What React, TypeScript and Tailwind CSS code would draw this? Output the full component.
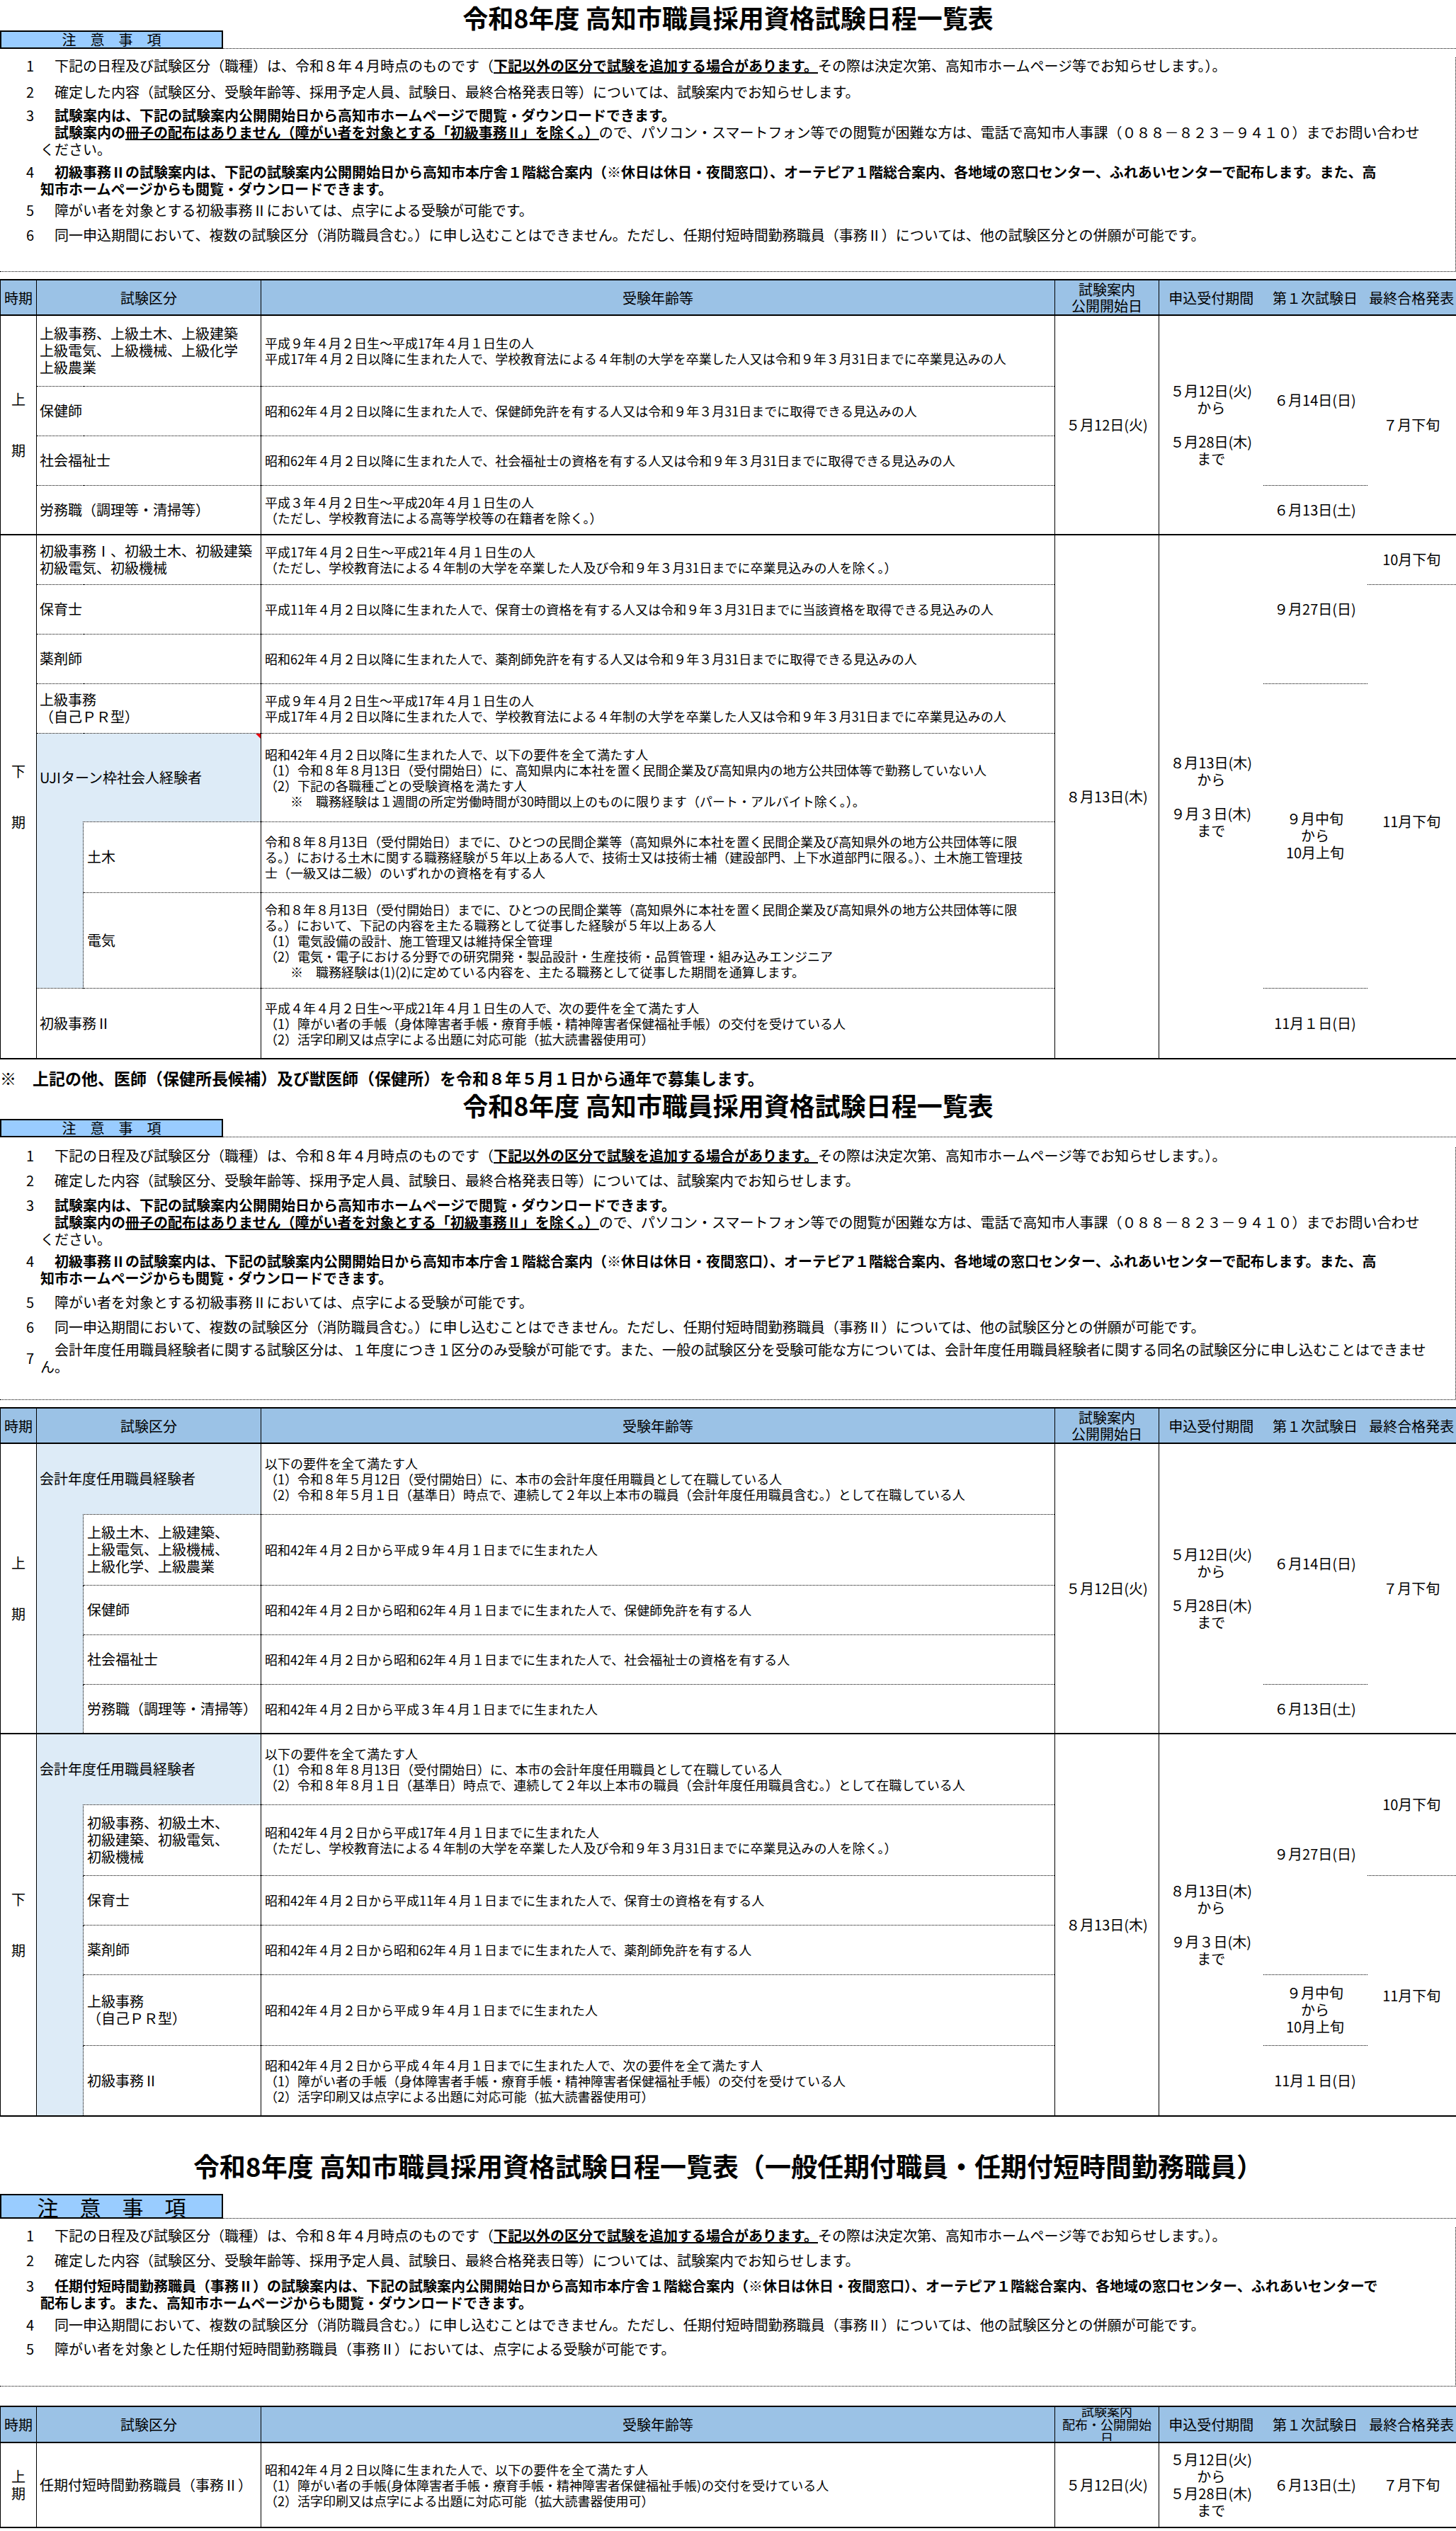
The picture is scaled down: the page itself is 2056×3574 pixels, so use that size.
import React from 'react';

// shared cell styles (Excel-like grid: solid verticals, dotted row rules)
const DT = 'border-t border-black [border-top-style:dotted]';
const DL = 'border-l border-black [border-left-style:dotted]';
const SR = 'border-r border-black';
const BLUE = 'bg-[#ddebf7]';
const PERIOD = 'border-x border-black text-center text-[20px] leading-[24px]';
const KUBUN = `${DT} ${SR} pl-[4px] text-[20px] leading-[24px] whitespace-nowrap`;
const LABEL = `${DT} ${DL} ${SR} pl-[5px] text-[20px] leading-[24px] whitespace-nowrap`;
const AGE = `${DT} ${SR} pl-[5px] text-[18px] leading-[22px] whitespace-nowrap`;
const DATE = 'text-center text-[20px] leading-[24px] whitespace-nowrap';

const SP = '　';

function NoticeHead({ big = false }: { big?: boolean }) {
  return (
    <div className="flex items-end">
      <div
        className={`flex w-[315px] items-center justify-center border-2 border-black bg-[#99ccff] leading-none ${
          big ? 'h-[35px] text-[30px]' : 'h-[26px] text-[20px]'
        }`}
      >
        注　意　事　項
      </div>
      <div className="flex-1 border-b border-dotted border-black" />
    </div>
  );
}

function Note({
  n,
  className = '',
  mid = false,
  children,
}: {
  n: string;
  className?: string;
  mid?: boolean;
  children: React.ReactNode;
}) {
  return (
    <div
      className={`flex ${mid ? 'items-center' : 'items-start'} pl-[37px] text-[20px] leading-[24px] whitespace-nowrap ${className}`}
    >
      <span className="w-[20px] shrink-0">{n}</span>
      <div>{children}</div>
    </div>
  );
}

function Note1({ className }: { className: string }) {
  return (
    <Note n="1" className={className}>
      {SP + '下記の日程及び試験区分（職種）は、令和８年４月時点のものです（'}
      <span className="font-bold underline">下記以外の区分で試験を追加する場合があります。</span>
      {'その際は決定次第、高知市ホームページ等でお知らせします。）。'}
    </Note>
  );
}

function Note2({ className }: { className: string }) {
  return (
    <Note n="2" className={className}>
      {SP + '確定した内容（試験区分、受験年齢等、採用予定人員、試験日、最終合格発表日等）については、試験案内でお知らせします。'}
    </Note>
  );
}

function Note3({ className }: { className: string }) {
  return (
    <Note n="3" className={className}>
      <span className="font-bold">{SP + '試験案内は、下記の試験案内公開開始日から高知市ホームページで閲覧・ダウンロードできます。'}</span>
      <br />
      <span className="font-bold">
        {SP + '試験案内の'}
        <span className="underline">冊子の配布はありません（障がい者を対象とする「初級事務Ⅱ」を除く。）</span>
      </span>
      {'ので、パソコン・スマートフォン等での閲覧が困難な方は、電話で高知市人事課（０８８－８２３－９４１０）までお問い合わせ'}
      <br />
      {'ください。'}
    </Note>
  );
}

function Note4({ className }: { className: string }) {
  return (
    <Note n="4" className={className}>
      <span className="font-bold">
        {SP +
          '初級事務Ⅱの試験案内は、下記の試験案内公開開始日から高知市本庁舎１階総合案内（※休日は休日・夜間窓口）、オーテピア１階総合案内、各地域の窓口センター、ふれあいセンターで配布します。また、高'}
        <br />
        {'知市ホームページからも閲覧・ダウンロードできます。'}
      </span>
    </Note>
  );
}

function Note6({ n, className }: { n: string; className: string }) {
  return (
    <Note n={n} className={className}>
      {SP +
        '同一申込期間において、複数の試験区分（消防職員含む。）に申し込むことはできません。ただし、任期付短時間勤務職員（事務Ⅱ）については、他の試験区分との併願が可能です。'}
    </Note>
  );
}

function Cols() {
  return (
    <colgroup>
      <col className="w-[51px]" />
      <col className="w-[66px]" />
      <col className="w-[251px]" />
      <col className="w-[1121px]" />
      <col className="w-[147px]" />
      <col className="w-[147px]" />
      <col className="w-[147px]" />
      <col className="w-[126px]" />
    </colgroup>
  );
}

function Head({ third = false }: { third?: boolean }) {
  return (
    <tr
      className={`${third ? 'h-[51px]' : 'h-[50px]'} border-y-2 border-black bg-[#9bc2e6] text-center text-[20px] leading-[23px] whitespace-nowrap`}
    >
      <td className="border-x border-black">時期</td>
      <td colSpan={2} className={SR}>試験区分</td>
      <td className={SR}>受験年齢等</td>
      <td className={SR}>
        {third ? (
          <div className="flex h-[47px] flex-col justify-center overflow-hidden text-[18px] leading-[19px]">
            <span>試験案内</span>
            <span>配布・公開開始</span>
            <span>日</span>
          </div>
        ) : (
          <>
            試験案内
            <br />
            公開開始日
          </>
        )}
      </td>
      <td>申込受付期間</td>
      <td>第１次試験日</td>
      <td className={SR}>最終合格発表</td>
    </tr>
  );
}

export default function App() {
  return (
    <div className="w-[2056px] overflow-x-clip bg-white text-black font-['Noto_Sans_CJK_JP','Noto_Sans',sans-serif]">
      {/* ===== 1. 令和8年度 一覧表 ===== */}
      <div className="flex h-[43px] items-center justify-center pt-[4px] text-[36px] leading-[38px] font-bold whitespace-nowrap">
        令和8年度 高知市職員採用資格試験日程一覧表
      </div>
      <NoticeHead />
      <div className="h-[303px] border-r border-b border-dotted border-black">
        <Note1 className="mt-[12px]" />
        <Note2 className="mt-[13px]" />
        <Note3 className="mt-[9px]" />
        <Note4 className="mt-[8px]" />
        <Note n="5" className="mt-[6px]">
          {SP + '障がい者を対象とする初級事務Ⅱにおいては、点字による受験が可能です。'}
        </Note>
        <Note6 n="6" className="mt-[11px]" />
      </div>

      <table className="mt-[10px] w-full table-fixed border-collapse">
        <Cols />
        <tbody>
          <Head />
          {/* 上期 */}
          <tr className="h-[100px]">
            <td rowSpan={4} className={PERIOD}>
              上<br /><br /><br />期
            </td>
            <td colSpan={2} className={KUBUN}>
              上級事務、上級土木、上級建築<br />上級電気、上級機械、上級化学<br />上級農業
            </td>
            <td className={AGE}>
              平成９年４月２日生～平成17年４月１日生の人
              <br />
              平成17年４月２日以降に生まれた人で、学校教育法による４年制の大学を卒業した人又は令和９年３月31日までに卒業見込みの人
            </td>
            <td rowSpan={4} className={`${SR} ${DATE}`}>５月12日(火)</td>
            <td rowSpan={4} className={DATE}>
              ５月12日(火)<br />から<br /><br />５月28日(木)<br />まで
            </td>
            <td rowSpan={3} className={`${DT} ${DATE}`}>６月14日(日)</td>
            <td rowSpan={4} className={`${DT} ${SR} ${DATE}`}>７月下旬</td>
          </tr>
          <tr className="h-[70px]">
            <td colSpan={2} className={KUBUN}>保健師</td>
            <td className={AGE}>
              昭和62年４月２日以降に生まれた人で、保健師免許を有する人又は令和９年３月31日までに取得できる見込みの人
            </td>
          </tr>
          <tr className="h-[70px]">
            <td colSpan={2} className={KUBUN}>社会福祉士</td>
            <td className={AGE}>
              昭和62年４月２日以降に生まれた人で、社会福祉士の資格を有する人又は令和９年３月31日までに取得できる見込みの人
            </td>
          </tr>
          <tr className="h-[70px]">
            <td colSpan={2} className={KUBUN}>労務職（調理等・清掃等）</td>
            <td className={AGE}>
              平成３年４月２日生～平成20年４月１日生の人
              <br />
              （ただし、学校教育法による高等学校等の在籍者を除く。）
            </td>
            <td className={`${DT} ${DATE}`}>６月13日(土)</td>
          </tr>
          {/* 下期 */}
          <tr className="h-[70px] border-t-2 border-black">
            <td rowSpan={8} className={PERIOD}>
              下<br /><br /><br />期
            </td>
            <td colSpan={2} className={KUBUN}>
              初級事務Ⅰ、初級土木、初級建築<br />初級電気、初級機械
            </td>
            <td className={AGE}>
              平成17年４月２日生～平成21年４月１日生の人
              <br />
              （ただし、学校教育法による４年制の大学を卒業した人及び令和９年３月31日までに卒業見込みの人を除く。）
            </td>
            <td rowSpan={8} className={`${SR} ${DATE}`}>８月13日(木)</td>
            <td rowSpan={8} className={DATE}>
              ８月13日(木)<br />から<br /><br />９月３日(木)<br />まで
            </td>
            <td rowSpan={3} className={`${DT} ${DATE}`}>９月27日(日)</td>
            <td className={`${DT} ${SR} ${DATE}`}>10月下旬</td>
          </tr>
          <tr className="h-[70px]">
            <td colSpan={2} className={KUBUN}>保育士</td>
            <td className={AGE}>
              平成11年４月２日以降に生まれた人で、保育士の資格を有する人又は令和９年３月31日までに当該資格を取得できる見込みの人
            </td>
            <td rowSpan={7} className={`${DT} ${SR} ${DATE}`}>11月下旬</td>
          </tr>
          <tr className="h-[70px]">
            <td colSpan={2} className={KUBUN}>薬剤師</td>
            <td className={AGE}>
              昭和62年４月２日以降に生まれた人で、薬剤師免許を有する人又は令和９年３月31日までに取得できる見込みの人
            </td>
          </tr>
          <tr className="h-[70px]">
            <td colSpan={2} className={KUBUN}>
              上級事務<br />（自己ＰＲ型）
            </td>
            <td className={AGE}>
              平成９年４月２日生～平成17年４月１日生の人
              <br />
              平成17年４月２日以降に生まれた人で、学校教育法による４年制の大学を卒業した人又は令和９年３月31日までに卒業見込みの人
            </td>
            <td rowSpan={4} className={`${DT} ${DATE}`}>
              ９月中旬<br />から<br />10月上旬
            </td>
          </tr>
          <tr className="h-[125px]">
            <td colSpan={2} className={`${KUBUN} ${BLUE} relative`}>
              UJIターン枠社会人経験者
              <span className="absolute top-0 right-0 h-0 w-0 border-t-[7px] border-l-[7px] border-t-red-600 border-l-transparent" />
            </td>
            <td className={AGE}>
              昭和42年４月２日以降に生まれた人で、以下の要件を全て満たす人
              <br />
              （1）令和８年８月13日（受付開始日）に、高知県内に本社を置く民間企業及び高知県内の地方公共団体等で勤務していない人
              <br />
              （2）下記の各職種ごとの受験資格を満たす人
              <br />
              {SP + SP + '※' + SP + '職務経験は１週間の所定労働時間が30時間以上のものに限ります（パート・アルバイト除く。）。'}
            </td>
          </tr>
          <tr className="h-[100px]">
            <td rowSpan={2} className={BLUE} />
            <td className={LABEL}>土木</td>
            <td className={AGE}>
              令和８年８月13日（受付開始日）までに、ひとつの民間企業等（高知県外に本社を置く民間企業及び高知県外の地方公共団体等に限
              <br />
              る。）における土木に関する職務経験が５年以上ある人で、技術士又は技術士補（建設部門、上下水道部門に限る。）、土木施工管理技
              <br />
              士（一級又は二級）のいずれかの資格を有する人
            </td>
          </tr>
          <tr className="h-[135px]">
            <td className={LABEL}>電気</td>
            <td className={AGE}>
              令和８年８月13日（受付開始日）までに、ひとつの民間企業等（高知県外に本社を置く民間企業及び高知県外の地方公共団体等に限
              <br />
              る。）において、下記の内容を主たる職務として従事した経験が５年以上ある人
              <br />
              （1）電気設備の設計、施工管理又は維持保全管理
              <br />
              （2）電気・電子における分野での研究開発・製品設計・生産技術・品質管理・組み込みエンジニア
              <br />
              {SP + SP + '※' + SP + '職務経験は(1)(2)に定めている内容を、主たる職務として従事した期間を通算します。'}
            </td>
          </tr>
          <tr className="h-[100px] border-b-2 border-black">
            <td colSpan={2} className={KUBUN}>初級事務Ⅱ</td>
            <td className={AGE}>
              平成４年４月２日生～平成21年４月１日生の人で、次の要件を全て満たす人
              <br />
              （1）障がい者の手帳（身体障害者手帳・療育手帳・精神障害者保健福祉手帳）の交付を受けている人
              <br />
              （2）活字印刷又は点字による出題に対応可能（拡大読書器使用可）
            </td>
            <td className={`${DT} ${DATE}`}>11月１日(日)</td>
          </tr>
        </tbody>
      </table>

      <div className="flex h-[44px] items-center pt-[7px] text-[23px] leading-[30px] font-bold whitespace-nowrap">
        ※　上記の他、医師（保健所長候補）及び獣医師（保健所）を令和８年５月１日から通年で募集します。
      </div>

      {/* ===== 2. 会計年度任用職員経験者 ===== */}
      <div className="flex h-[40px] items-center justify-center text-[36px] leading-[40px] font-bold whitespace-nowrap">
        令和8年度 高知市職員採用資格試験日程一覧表
      </div>
      <NoticeHead />
      <div className="h-[357px] border-r border-b border-dotted border-black">
        <Note1 className="mt-[14px]" />
        <Note2 className="mt-[11px]" />
        <Note3 className="mt-[11px]" />
        <Note4 className="mt-[7px]" />
        <Note n="5" className="mt-[10px]">
          {SP + '障がい者を対象とする初級事務Ⅱにおいては、点字による受験が可能です。'}
        </Note>
        <Note6 n="6" className="mt-[11px]" />
        <Note n="7" className="mt-[8px]" mid>
          {SP +
            '会計年度任用職員経験者に関する試験区分は、１年度につき１区分のみ受験が可能です。また、一般の試験区分を受験可能な方については、会計年度任用職員経験者に関する同名の試験区分に申し込むことはできませ'}
          <br />
          {'ん。'}
        </Note>
      </div>

      <table className="mt-[10px] w-full table-fixed border-collapse">
        <Cols />
        <tbody>
          <Head />
          {/* 上期 */}
          <tr className="h-[100px]">
            <td rowSpan={5} className={PERIOD}>
              上<br /><br /><br />期
            </td>
            <td colSpan={2} className={`${KUBUN} ${BLUE}`}>会計年度任用職員経験者</td>
            <td className={AGE}>
              以下の要件を全て満たす人
              <br />
              （1）令和８年５月12日（受付開始日）に、本市の会計年度任用職員として在職している人
              <br />
              （2）令和８年５月１日（基準日）時点で、連続して２年以上本市の職員（会計年度任用職員含む。）として在職している人
            </td>
            <td rowSpan={5} className={`${SR} ${DATE}`}>５月12日(火)</td>
            <td rowSpan={5} className={DATE}>
              ５月12日(火)<br />から<br /><br />５月28日(木)<br />まで
            </td>
            <td rowSpan={4} className={`${DT} ${DATE}`}>６月14日(日)</td>
            <td rowSpan={5} className={`${DT} ${SR} ${DATE}`}>７月下旬</td>
          </tr>
          <tr className="h-[100px]">
            <td rowSpan={4} className={BLUE} />
            <td className={LABEL}>
              上級土木、上級建築、<br />上級電気、上級機械、<br />上級化学、上級農業
            </td>
            <td className={AGE}>昭和42年４月２日から平成９年４月１日までに生まれた人</td>
          </tr>
          <tr className="h-[70px]">
            <td className={LABEL}>保健師</td>
            <td className={AGE}>昭和42年４月２日から昭和62年４月１日までに生まれた人で、保健師免許を有する人</td>
          </tr>
          <tr className="h-[70px]">
            <td className={LABEL}>社会福祉士</td>
            <td className={AGE}>昭和42年４月２日から昭和62年４月１日までに生まれた人で、社会福祉士の資格を有する人</td>
          </tr>
          <tr className="h-[70px]">
            <td className={LABEL}>労務職（調理等・清掃等）</td>
            <td className={AGE}>昭和42年４月２日から平成３年４月１日までに生まれた人</td>
            <td className={`${DT} ${DATE}`}>６月13日(土)</td>
          </tr>
          {/* 下期 */}
          <tr className="h-[100px] border-t-2 border-black">
            <td rowSpan={6} className={PERIOD}>
              下<br /><br /><br />期
            </td>
            <td colSpan={2} className={`${KUBUN} ${BLUE}`}>会計年度任用職員経験者</td>
            <td className={AGE}>
              以下の要件を全て満たす人
              <br />
              （1）令和８年８月13日（受付開始日）に、本市の会計年度任用職員として在職している人
              <br />
              （2）令和８年８月１日（基準日）時点で、連続して２年以上本市の職員（会計年度任用職員含む。）として在職している人
            </td>
            <td rowSpan={6} className={`${SR} ${DATE}`}>８月13日(木)</td>
            <td rowSpan={6} className={DATE}>
              ８月13日(木)<br />から<br /><br />９月３日(木)<br />まで
            </td>
            <td rowSpan={4} className={`${DT} ${DATE}`}>９月27日(日)</td>
            <td rowSpan={2} className={`${DT} ${SR} ${DATE}`}>10月下旬</td>
          </tr>
          <tr className="h-[100px]">
            <td rowSpan={5} className={BLUE} />
            <td className={LABEL}>
              初級事務、初級土木、<br />初級建築、初級電気、<br />初級機械
            </td>
            <td className={AGE}>
              昭和42年４月２日から平成17年４月１日までに生まれた人
              <br />
              （ただし、学校教育法による４年制の大学を卒業した人及び令和９年３月31日までに卒業見込みの人を除く。）
            </td>
          </tr>
          <tr className="h-[70px]">
            <td className={LABEL}>保育士</td>
            <td className={AGE}>昭和42年４月２日から平成11年４月１日までに生まれた人で、保育士の資格を有する人</td>
            <td rowSpan={4} className={`${DT} ${SR} ${DATE}`}>11月下旬</td>
          </tr>
          <tr className="h-[70px]">
            <td className={LABEL}>薬剤師</td>
            <td className={AGE}>昭和42年４月２日から昭和62年４月１日までに生まれた人で、薬剤師免許を有する人</td>
          </tr>
          <tr className="h-[100px]">
            <td className={LABEL}>
              上級事務<br />（自己ＰＲ型）
            </td>
            <td className={AGE}>昭和42年４月２日から平成９年４月１日までに生まれた人</td>
            <td className={`${DT} ${DATE}`}>
              ９月中旬<br />から<br />10月上旬
            </td>
          </tr>
          <tr className="h-[100px] border-b-2 border-black">
            <td className={LABEL}>初級事務Ⅱ</td>
            <td className={AGE}>
              昭和42年４月２日から平成４年４月１日までに生まれた人で、次の要件を全て満たす人
              <br />
              （1）障がい者の手帳（身体障害者手帳・療育手帳・精神障害者保健福祉手帳）の交付を受けている人
              <br />
              （2）活字印刷又は点字による出題に対応可能（拡大読書器使用可）
            </td>
            <td className={`${DT} ${DATE}`}>11月１日(日)</td>
          </tr>
        </tbody>
      </table>

      {/* ===== 3. 一般任期付職員・任期付短時間勤務職員 ===== */}
      <div className="flex h-[109px] items-center justify-center pt-[28px] text-[37px] leading-[40px] font-bold whitespace-nowrap">
        令和8年度 高知市職員採用資格試験日程一覧表（一般任期付職員・任期付短時間勤務職員）
      </div>
      <NoticeHead big />
      <div className="h-[225px] border-r border-b border-dotted border-black">
        <Note1 className="mt-[12px]" />
        <Note2 className="mt-[11px]" />
        <Note n="3" className="mt-[12px]">
          <span className="font-bold">
            {SP +
              '任期付短時間勤務職員（事務Ⅱ）の試験案内は、下記の試験案内公開開始日から高知市本庁舎１階総合案内（※休日は休日・夜間窓口）、オーテピア１階総合案内、各地域の窓口センター、ふれあいセンターで'}
            <br />
            {'配布します。また、高知市ホームページからも閲覧・ダウンロードできます。'}
          </span>
        </Note>
        <Note6 n="4" className="mt-[7px]" />
        <Note n="5" className="mt-[10px]">
          {SP + '障がい者を対象とした任期付短時間勤務職員（事務Ⅱ）においては、点字による受験が可能です。'}
        </Note>
      </div>

      <table className="mt-[27px] w-full table-fixed border-collapse">
        <Cols />
        <tbody>
          <Head third />
          <tr className="h-[120px] border-b-2 border-black">
            <td className={PERIOD}>
              上<br />期
            </td>
            <td colSpan={2} className={KUBUN}>任期付短時間勤務職員（事務Ⅱ）</td>
            <td className={AGE}>
              昭和42年４月２日以降に生まれた人で、以下の要件を全て満たす人
              <br />
              （1）障がい者の手帳(身体障害者手帳・療育手帳・精神障害者保健福祉手帳)の交付を受けている人
              <br />
              （2）活字印刷又は点字による出題に対応可能（拡大読書器使用可）
            </td>
            <td className={`${SR} ${DATE}`}>５月12日(火)</td>
            <td className={DATE}>
              ５月12日(火)<br />から<br />５月28日(木)<br />まで
            </td>
            <td className={`${DT} ${DATE}`}>６月13日(土)</td>
            <td className={`${DT} ${SR} ${DATE}`}>７月下旬</td>
          </tr>
        </tbody>
      </table>

      <div className="flex h-[48px] items-center pt-[16px] text-[23px] leading-[30px] font-bold whitespace-nowrap">
        ※　上記の他、一般任期付職員（発掘調査員）を令和８年６月１日から通年で募集します。
      </div>
    </div>
  );
}
